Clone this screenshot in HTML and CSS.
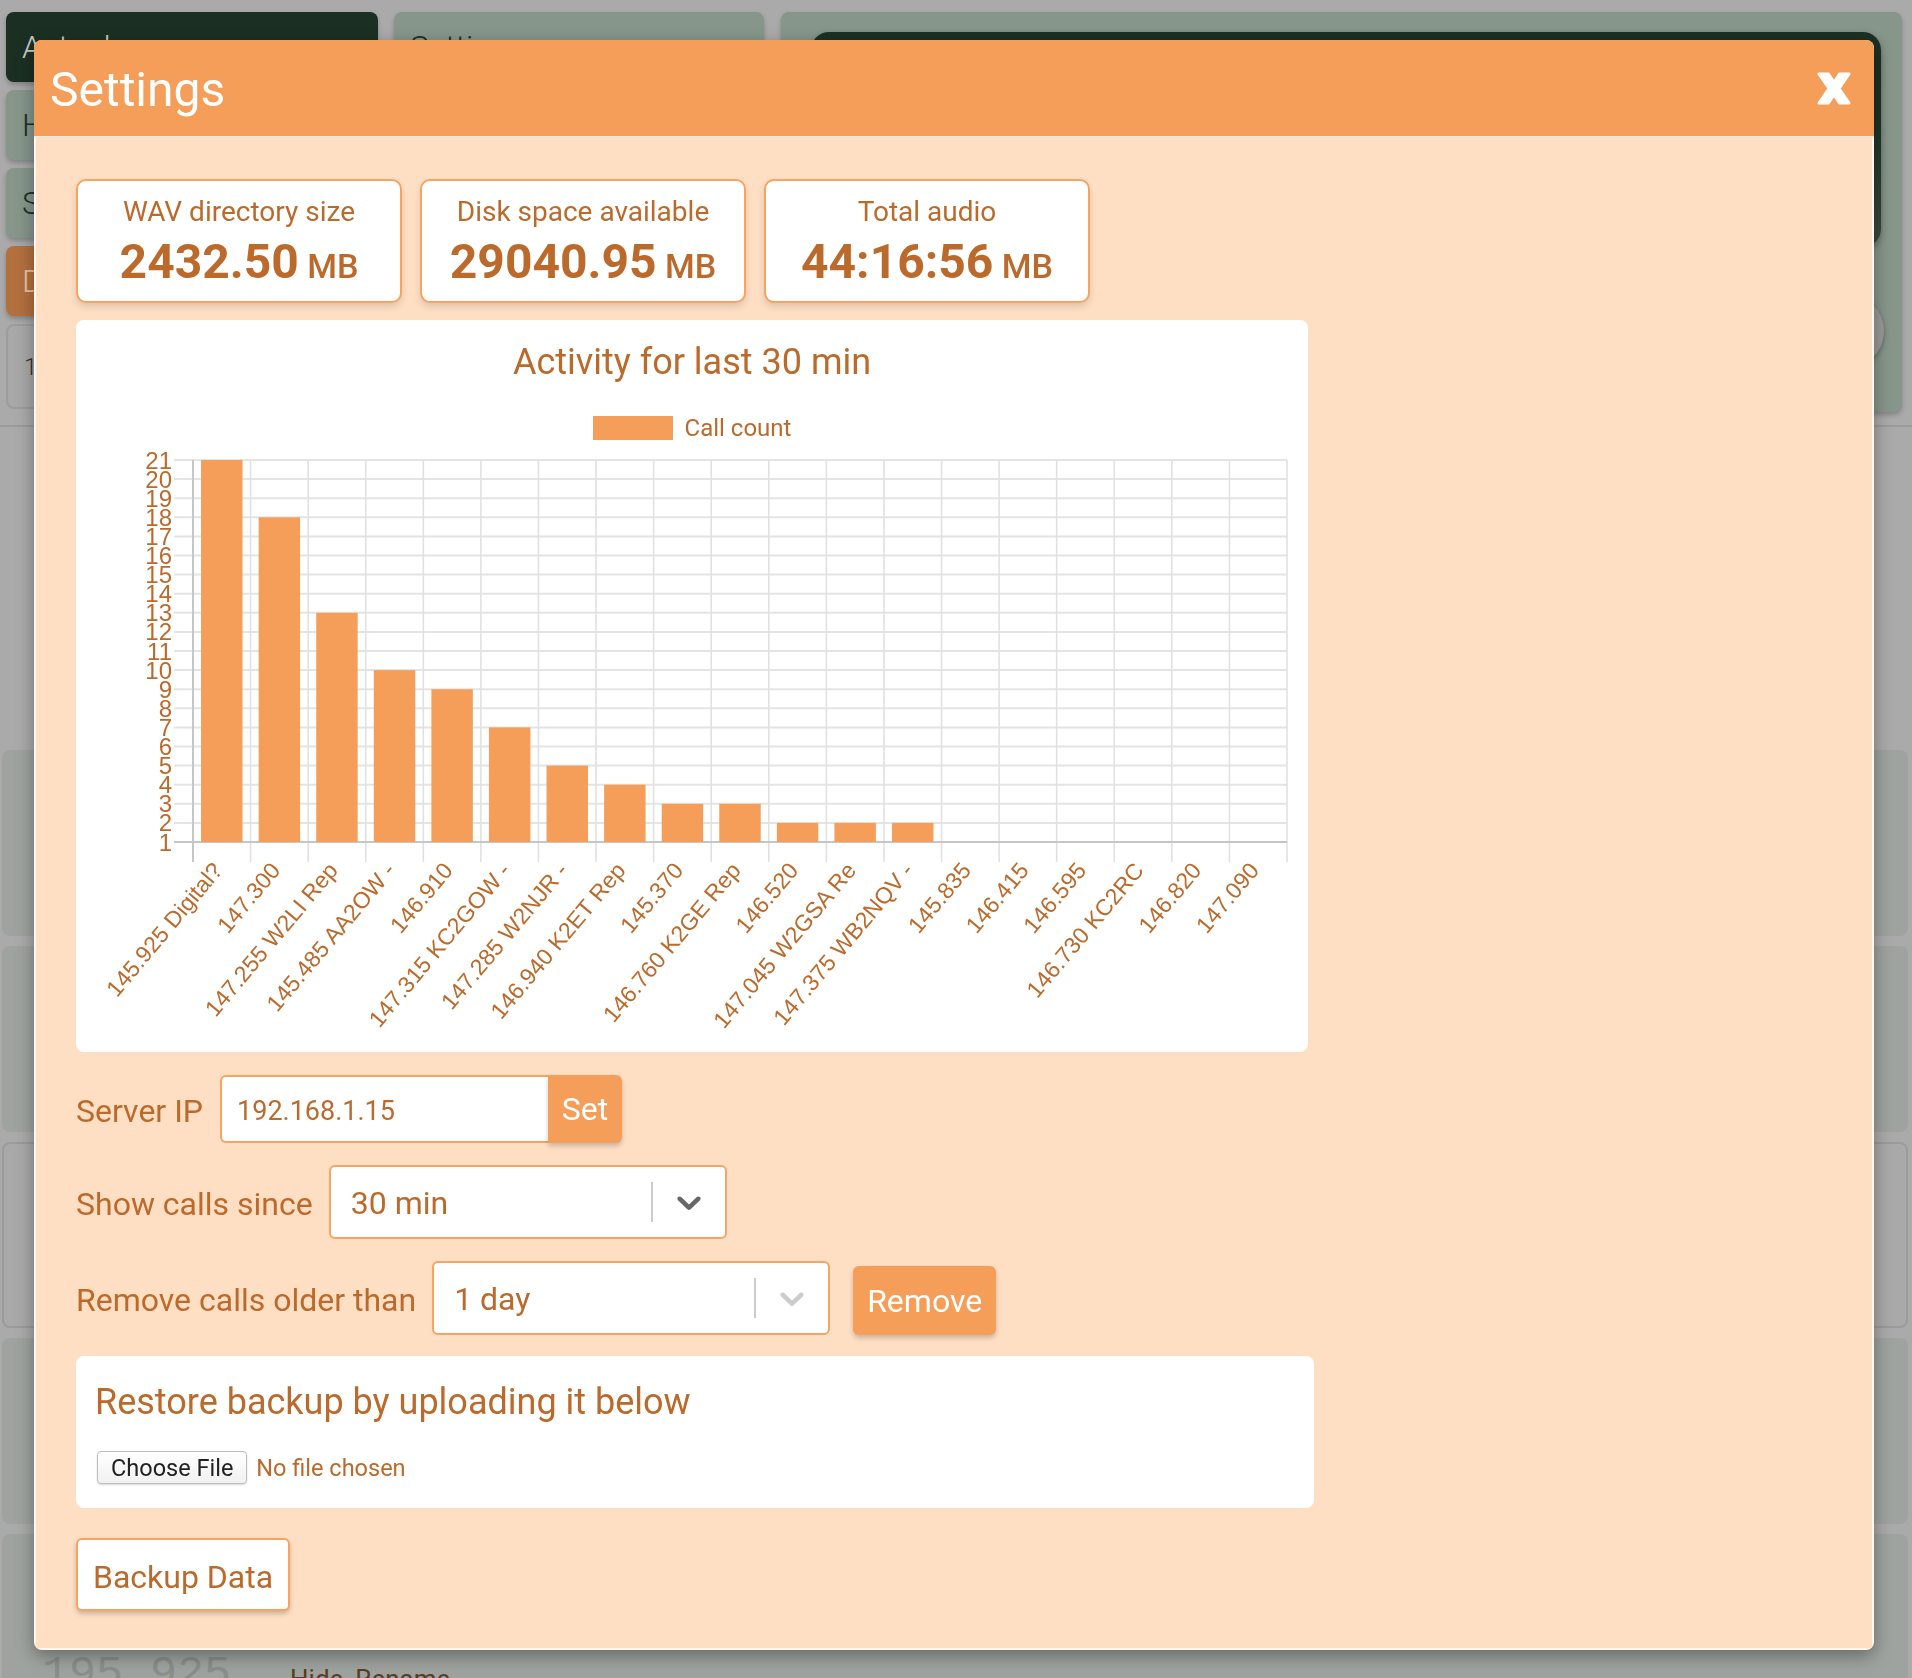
FILE: index.html
```html
<!DOCTYPE html>
<html lang="en">
<head>
<meta charset="utf-8">
<title>Settings</title>
<link rel="stylesheet" href="styles.css">
</head>
<body>
<div class="app">
  <div class="top">
    <div class="col-left">
      <div class="bg-btn dark">Actual</div>
      <div class="bg-btn sage">History</div>
      <div class="bg-btn sage">Scan</div>
      <div class="bg-btn rust">Delete</div>
      <div class="bg-btn outline">1</div>
    </div>
    <div class="col-mid">
      <div class="bg-btn sage">Settings</div>
    </div>
    <div class="panel">
      <div class="panel-dark"></div>
      <div class="panel-circle"></div>
    </div>
  </div>
  <div class="divider"></div>
  <div class="cards">
    <div class="bg-card"></div>
    <div class="bg-card"></div>
    <div class="bg-card outline-card"></div>
    <div class="bg-card"></div>
    <div class="bg-card last"><span class="freq">195.925</span><span class="links"><span>Hide</span><span>Rename</span></span></div>
  </div>
</div>

<div class="modal">
  <div class="modal-header">
    <h1 class="modal-title">Settings</h1>
    <button class="close" aria-label="Close">
      <svg width="34" height="33" viewBox="0 0 34 33"><path d="M2 2 L11.5 2 L17 10.5 L22.5 2 L32 2 L22 16.5 L32 31 L22.5 31 L17 22.5 L11.5 31 L2 31 L12 16.5 Z" fill="#fff" stroke="#fff" stroke-width="3" stroke-linejoin="round"/></svg>
    </button>
  </div>
  <div class="modal-body">
    <div class="stats">
      <div class="stat"><div class="stat-label">WAV directory size</div><div class="stat-value">2432.50<span class="unit"> MB</span></div></div>
      <div class="stat"><div class="stat-label">Disk space available</div><div class="stat-value">29040.95<span class="unit"> MB</span></div></div>
      <div class="stat"><div class="stat-label">Total audio</div><div class="stat-value">44:16:56<span class="unit"> MB</span></div></div>
    </div>

    <div class="chart-card">
      <div class="chart-title">Activity for last 30 min</div>
      <div class="legend"><span class="legend-box"></span><span>Call count</span></div>
      <svg class="plot" width="1232" height="612" viewBox="0 0 1232 612">
        <g stroke="#e4e4e4" stroke-width="2">
          <line x1="98" y1="382.9" x2="1211" y2="382.9"/>
          <line x1="98" y1="363.8" x2="1211" y2="363.8"/>
          <line x1="98" y1="344.7" x2="1211" y2="344.7"/>
          <line x1="98" y1="325.6" x2="1211" y2="325.6"/>
          <line x1="98" y1="306.5" x2="1211" y2="306.5"/>
          <line x1="98" y1="287.4" x2="1211" y2="287.4"/>
          <line x1="98" y1="268.3" x2="1211" y2="268.3"/>
          <line x1="98" y1="249.2" x2="1211" y2="249.2"/>
          <line x1="98" y1="230.1" x2="1211" y2="230.1"/>
          <line x1="98" y1="211" x2="1211" y2="211"/>
          <line x1="98" y1="191.9" x2="1211" y2="191.9"/>
          <line x1="98" y1="172.8" x2="1211" y2="172.8"/>
          <line x1="98" y1="153.7" x2="1211" y2="153.7"/>
          <line x1="98" y1="134.6" x2="1211" y2="134.6"/>
          <line x1="98" y1="115.5" x2="1211" y2="115.5"/>
          <line x1="98" y1="96.4" x2="1211" y2="96.4"/>
          <line x1="98" y1="77.3" x2="1211" y2="77.3"/>
          <line x1="98" y1="58.2" x2="1211" y2="58.2"/>
          <line x1="98" y1="39.1" x2="1211" y2="39.1"/>
          <line x1="98" y1="20" x2="1211" y2="20"/>
        </g>
        <g stroke="#e1e1e1" stroke-width="1.6">
          <line x1="174.58" y1="20" x2="174.58" y2="422"/>
          <line x1="232.16" y1="20" x2="232.16" y2="422"/>
          <line x1="289.74" y1="20" x2="289.74" y2="422"/>
          <line x1="347.32" y1="20" x2="347.32" y2="422"/>
          <line x1="404.89" y1="20" x2="404.89" y2="422"/>
          <line x1="462.47" y1="20" x2="462.47" y2="422"/>
          <line x1="520.05" y1="20" x2="520.05" y2="422"/>
          <line x1="577.63" y1="20" x2="577.63" y2="422"/>
          <line x1="635.21" y1="20" x2="635.21" y2="422"/>
          <line x1="692.79" y1="20" x2="692.79" y2="422"/>
          <line x1="750.37" y1="20" x2="750.37" y2="422"/>
          <line x1="807.95" y1="20" x2="807.95" y2="422"/>
          <line x1="865.53" y1="20" x2="865.53" y2="422"/>
          <line x1="923.11" y1="20" x2="923.11" y2="422"/>
          <line x1="980.68" y1="20" x2="980.68" y2="422"/>
          <line x1="1038.26" y1="20" x2="1038.26" y2="422"/>
          <line x1="1095.84" y1="20" x2="1095.84" y2="422"/>
          <line x1="1153.42" y1="20" x2="1153.42" y2="422"/>
          <line x1="1211" y1="20" x2="1211" y2="422"/>
        </g>
        <g stroke="#c6c6c6" stroke-width="2">
          <line x1="98" y1="402" x2="1211" y2="402"/>
          <line x1="117" y1="20" x2="117" y2="422"/>
        </g>
        <g fill="#f59e5a">
          <rect x="125.06" y="20" width="41.46" height="382"/>
          <rect x="182.64" y="77.3" width="41.46" height="324.7"/>
          <rect x="240.22" y="172.8" width="41.46" height="229.2"/>
          <rect x="297.8" y="230.1" width="41.46" height="171.9"/>
          <rect x="355.38" y="249.2" width="41.46" height="152.8"/>
          <rect x="412.95" y="287.4" width="41.46" height="114.6"/>
          <rect x="470.53" y="325.6" width="41.46" height="76.4"/>
          <rect x="528.11" y="344.7" width="41.46" height="57.3"/>
          <rect x="585.69" y="363.8" width="41.46" height="38.2"/>
          <rect x="643.27" y="363.8" width="41.46" height="38.2"/>
          <rect x="700.85" y="382.9" width="41.46" height="19.1"/>
          <rect x="758.43" y="382.9" width="41.46" height="19.1"/>
          <rect x="816.01" y="382.9" width="41.46" height="19.1"/>
        </g>
        <g class="ticks" text-anchor="end">
          <text x="96" y="410.5">1</text>
          <text x="96" y="391.4">2</text>
          <text x="96" y="372.3">3</text>
          <text x="96" y="353.2">4</text>
          <text x="96" y="334.1">5</text>
          <text x="96" y="315">6</text>
          <text x="96" y="295.9">7</text>
          <text x="96" y="276.8">8</text>
          <text x="96" y="257.7">9</text>
          <text x="96" y="238.6">10</text>
          <text x="96" y="219.5">11</text>
          <text x="96" y="200.4">12</text>
          <text x="96" y="181.3">13</text>
          <text x="96" y="162.2">14</text>
          <text x="96" y="143.1">15</text>
          <text x="96" y="124">16</text>
          <text x="96" y="104.9">17</text>
          <text x="96" y="85.8">18</text>
          <text x="96" y="66.7">19</text>
          <text x="96" y="47.6">20</text>
          <text x="96" y="28.5">21</text>
        </g>
        <g class="ticks xlabels" text-anchor="end">
          <text x="147.8" y="431" transform="rotate(-50 147.8 431)">145.925 Digital?</text>
          <text x="205.4" y="431" transform="rotate(-50 205.4 431)">147.300</text>
          <text x="263" y="431" transform="rotate(-50 263 431)">147.255 W2LI Rep</text>
          <text x="320.5" y="431" transform="rotate(-50 320.5 431)">145.485 AA2OW -</text>
          <text x="378.1" y="431" transform="rotate(-50 378.1 431)">146.910</text>
          <text x="435.7" y="431" transform="rotate(-50 435.7 431)">147.315 KC2GOW -</text>
          <text x="493.3" y="431" transform="rotate(-50 493.3 431)">147.285 W2NJR -</text>
          <text x="550.8" y="431" transform="rotate(-50 550.8 431)">146.940 K2ET Rep</text>
          <text x="608.4" y="431" transform="rotate(-50 608.4 431)">145.370</text>
          <text x="666" y="431" transform="rotate(-50 666 431)">146.760 K2GE Rep</text>
          <text x="723.6" y="431" transform="rotate(-50 723.6 431)">146.520</text>
          <text x="781.2" y="431" transform="rotate(-50 781.2 431)">147.045 W2GSA Re</text>
          <text x="838.7" y="431" transform="rotate(-50 838.7 431)">147.375 WB2NQV -</text>
          <text x="896.3" y="431" transform="rotate(-50 896.3 431)">145.835</text>
          <text x="953.9" y="431" transform="rotate(-50 953.9 431)">146.415</text>
          <text x="1011.5" y="431" transform="rotate(-50 1011.5 431)">146.595</text>
          <text x="1069" y="431" transform="rotate(-50 1069 431)">146.730 KC2RC</text>
          <text x="1126.6" y="431" transform="rotate(-50 1126.6 431)">146.820</text>
          <text x="1184.2" y="431" transform="rotate(-50 1184.2 431)">147.090</text>
        </g>
      </svg>
    </div>

    <div class="form-row first">
      <label class="form-label">Server IP</label>
      <div class="input-group">
        <input class="text-input" type="text" value="192.168.1.15">
        <button class="btn-set">Set</button>
      </div>
    </div>

    <div class="form-row">
      <label class="form-label">Show calls since</label>
      <div class="select">
        <div class="select-value">30 min</div>
        <span class="select-sep"></span>
        <span class="select-ind">
          <svg width="40" height="40" viewBox="0 0 20 20"><path fill="#666" d="M4.516 7.548c0.436-0.446 1.043-0.481 1.576 0l3.908 3.747 3.908-3.747c0.533-0.481 1.141-0.446 1.574 0 0.436 0.445 0.408 1.197 0 1.615-0.406 0.418-4.695 4.502-4.695 4.502-0.217 0.223-0.502 0.335-0.787 0.335s-0.57-0.112-0.789-0.335c0 0-4.287-4.084-4.695-4.502s-0.436-1.170 0-1.615z"/></svg>
        </span>
      </div>
    </div>

    <div class="form-row">
      <label class="form-label">Remove calls older than</label>
      <div class="select">
        <div class="select-value">1 day</div>
        <span class="select-sep"></span>
        <span class="select-ind">
          <svg width="40" height="40" viewBox="0 0 20 20"><path fill="#cccccc" d="M4.516 7.548c0.436-0.446 1.043-0.481 1.576 0l3.908 3.747 3.908-3.747c0.533-0.481 1.141-0.446 1.574 0 0.436 0.445 0.408 1.197 0 1.615-0.406 0.418-4.695 4.502-4.695 4.502-0.217 0.223-0.502 0.335-0.787 0.335s-0.57-0.112-0.789-0.335c0 0-4.287-4.084-4.695-4.502s-0.436-1.170 0-1.615z"/></svg>
        </span>
      </div>
      <button class="btn-remove">Remove</button>
    </div>

    <div class="restore">
      <h3 class="restore-title">Restore backup by uploading it below</h3>
      <div class="file">
        <span class="file-btn">Choose File</span>
        <span class="file-name">No file chosen</span>
      </div>
    </div>

    <button class="btn-backup">Backup Data</button>
  </div>
</div>
</body>
</html>
```

FILE: styles.css
```css
* { box-sizing: border-box; }
html, body { margin: 0; padding: 0; }
body {
  width: 1912px;
  height: 1678px;
  overflow: hidden;
  background: #aaaaaa;
  font-family: Roboto, "Noto Sans", sans-serif;
}

/* ---------- background application (dimmed) ---------- */
.app { padding: 12px 6px 0 6px; }
.top { display: flex; height: 400px; }
.col-left { width: 372px; display: flex; flex-direction: column; gap: 8px; }
.bg-btn {
  height: 70px;
  border-radius: 8px;
  display: flex;
  align-items: center;
  padding-left: 16px;
  font-size: 32px;
  font-weight: 300;
  color: #1b3022;
  box-shadow: 0 3px 5px rgba(0, 0, 0, 0.22);
}
.dark { background: #1b3022; color: #c8c8c8; }
.sage { background: #86968b; }
.rust { background: #b3703f; color: #e6c4a2; }
.outline { height: 85px; background: #a8a8a8; border: 2px solid #9c9c9c; box-shadow: none; font-size: 24px; color: #333; }
.col-mid { width: 370px; margin-left: 16px; }
.panel {
  width: 1121px;
  margin-left: 17px;
  background: #86968b;
  border-radius: 8px;
  display: flex;
  flex-direction: column;
  align-items: flex-end;
  box-shadow: 0 3px 5px rgba(0, 0, 0, 0.22);
}
.panel-dark {
  align-self: stretch;
  margin: 20px 21px 0 30px;
  height: 215px;
  border-radius: 18px;
  background: linear-gradient(#1b3022 0%, #1e3325 45%, #3b4a40 100%);
  box-shadow: 0 3px 6px rgba(0, 0, 0, 0.3);
}
.panel-circle {
  width: 76px;
  height: 76px;
  border-radius: 50%;
  background: #9a9a9a;
  margin: 46px 18px 0 0;
  box-shadow: 0 2px 5px rgba(0, 0, 0, 0.3);
}
.divider { height: 2px; background: #9b9b9b; margin: 13px -6px 0 -6px; }
.cards { margin: 323px -2px 0 -4px; display: flex; flex-direction: column; gap: 10px; }
.bg-card { height: 186px; border-radius: 8px; background: #9ea39f; }
.outline-card { background: #a9a9a9; border: 2px solid #9b9b9b; }
.bg-card.last { display: flex; align-items: flex-start; padding: 118px 0 0 40px; gap: 59px; }
.freq { font-family: "Liberation Mono", monospace; font-size: 45px; color: #8a8f8b; line-height: 1; }
.links { display: flex; gap: 12px; font-size: 26px; color: #5a3d22; padding-top: 12px; }

/* ---------- modal ---------- */
.modal {
  position: fixed;
  top: 40px;
  left: 34px;
  width: 1840px;
  background: #fdf6ef;
  border-radius: 8px;
  overflow: hidden;
  box-shadow: 0 6px 18px rgba(0, 0, 0, 0.35);
}
.modal-header {
  height: 97px;
  background: #f59e5a;
  border-bottom: 1px solid #f4e9df;
  display: flex;
  align-items: center;
  justify-content: space-between;
  padding: 0 23px 0 16px;
}
.modal-title {
  margin: 0;
  padding-top: 3px;
  font-size: 48px;
  line-height: 57.6px;
  font-weight: 400;
  color: #ffffff;
}
.close {
  border: none;
  background: none;
  padding: 0;
  width: 34px;
  height: 33px;
  display: block;
}
.close svg { display: block; }

.modal-body {
  background: #fedfc4;
  margin: 0 2px 2px 2px;
  padding: 42px 40px 37px 40px;
  color: #bc6a2c;
}

.stats { display: flex; gap: 18px; }
.stat {
  width: 326px;
  height: 124px;
  background: #ffffff;
  border: 2px solid #f5a461;
  border-radius: 10px;
  padding: 10px 0;
  text-align: center;
  box-shadow: 0 4px 7px rgba(0, 0, 0, 0.12);
}
.stat-label { font-size: 28px; line-height: 42px; }
.stat-value { font-size: 48px; line-height: 58px; font-weight: 700; }
.unit { font-size: 34px; font-weight: 500; }

.chart-card {
  margin-top: 17px;
  width: 1232px;
  height: 732px;
  background: #ffffff;
  border-radius: 8px;
  padding-top: 20px;
}
.chart-title { font-size: 36px; line-height: 44px; text-align: center; }
.legend {
  margin-top: 32px;
  height: 24px;
  display: flex;
  justify-content: center;
  align-items: center;
  gap: 12px;
  font-size: 24px;
  line-height: 24px;
}
.legend-box { width: 80px; height: 24px; background: #f59e5a; }
.plot { display: block; }
.ticks { font-family: "Liberation Sans", Arial, sans-serif; font-size: 24px; fill: #bc6a2c; }
.xlabels { font-size: 23px; }

.form-row { display: flex; align-items: center; margin-top: 22px; }
.form-row.first { margin-top: 23px; }
.form-label { font-size: 32px; margin-right: 16px; padding-top: 4px; }
.input-group { display: flex; height: 68px; margin-left: 1px; }
.text-input {
  width: 328px;
  height: 68px;
  border: 2px solid #f5a461;
  border-right: none;
  border-radius: 6px 0 0 6px;
  padding: 3px 15px 0 15px;
  font-family: Roboto, sans-serif;
  font-size: 27px;
  color: #bc6a2c;
  background: #ffffff;
  outline: none;
}
.btn-set {
  width: 74px;
  height: 68px;
  border: none;
  padding: 0;
  background: #f59e5a;
  color: #ffffff;
  font-family: Roboto, sans-serif;
  font-size: 32px;
  border-radius: 0 6px 6px 0;
  box-shadow: 0 3px 5px rgba(0, 0, 0, 0.2);
}
.select {
  width: 398px;
  height: 74px;
  border: 2px solid #f5a461;
  border-radius: 6px;
  background: #ffffff;
  display: flex;
  align-items: center;
}
.select-value { flex: 1; padding: 2px 0 0 20px; font-size: 32px; }
.select-sep { width: 2px; height: 40px; background: #cccccc; }
.select-ind { padding: 0 16px; display: flex; }
.select-ind svg { display: block; }
.btn-remove {
  margin-left: 23px;
  margin-top: 5px;
  width: 143px;
  height: 69px;
  border: none;
  padding: 0;
  border-radius: 6px;
  background: #f59e5a;
  color: #ffffff;
  font-family: Roboto, sans-serif;
  font-size: 32px;
  box-shadow: 0 3px 5px rgba(0, 0, 0, 0.2);
}

.restore {
  margin-top: 21px;
  width: 1238px;
  height: 152px;
  background: #ffffff;
  border-radius: 8px;
  padding: 25px 17px 0 19px;
}
.restore-title { margin: 0; font-size: 36px; line-height: 43px; font-weight: 400; }
.file { margin: 27px 0 0 2px; display: flex; align-items: center; gap: 9px; font-size: 23.5px; }
.file-btn {
  height: 33px;
  padding: 0 13px;
  display: flex;
  align-items: center;
  border: 1px solid #bdbdbd;
  border-radius: 4px;
  background: linear-gradient(#ffffff, #f1f1f1);
  color: #222222;
  box-shadow: 0 1px 2px rgba(0, 0, 0, 0.15);
}
.file-name { color: #bc6a2c; }

.btn-backup {
  display: block;
  margin-top: 30px;
  height: 73px;
  padding: 4px 15px 0 15px;
  border: 2px solid #f5a461;
  border-radius: 6px;
  background: #ffffff;
  color: #bc6a2c;
  font-family: Roboto, sans-serif;
  font-size: 32px;
  box-shadow: 0 3px 5px rgba(0, 0, 0, 0.2);
}
```
